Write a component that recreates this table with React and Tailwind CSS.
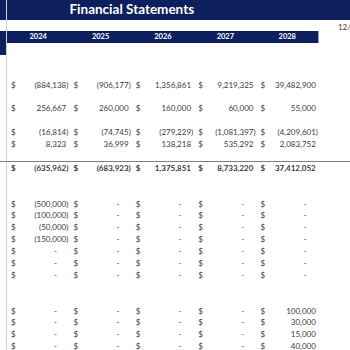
import React from 'react';

const NAVY = 'bg-[#0d1f5c]';

const ROWS = [
  { navyLeft: true },
  {},
  {},
  { vals: [-884138, -906177, 1356861, 9219325, 39482900] },
  {},
  { vals: [256667, 260000, 160000, 60000, 55000] },
  {},
  { vals: [-16814, -74745, -279229, -1081397, -4209601] },
  { vals: [8323, 36999, 138218, 535292, 2083752] },
  { line: true },
  { vals: [-635962, -683923, 1375851, 8733220, 37412052], bold: true },
  {},
  {},
  { vals: [-500000, 0, 0, 0, 0] },
  { vals: [-100000, 0, 0, 0, 0] },
  { vals: [-50000, 0, 0, 0, 0] },
  { vals: [-150000, 0, 0, 0, 0] },
  { vals: [0, 0, 0, 0, 0] },
  { vals: [0, 0, 0, 0, 0] },
  { vals: [0, 0, 0, 0, 0] },
  {},
  {},
  { vals: [0, 0, 0, 0, 100000] },
  { vals: [0, 0, 0, 0, 30000] },
  { vals: [0, 0, 0, 0, 15000] },
  { vals: [0, 0, 0, 0, 40000] },
];

const YEARS = [2024, 2025, 2026, 2027, 2028];

const grid = 'grid grid-cols-[7px_repeat(5,62.4px)_1fr]';

// accounting format: $ on the left, value right with paren padding
const Value = ({ v }) => {
  if (v === 0)
    return (
      <span>
        -<span className="invisible">00)</span>
      </span>
    );
  const s = Math.abs(v).toLocaleString('en-US');
  if (v < 0) return <span>({s})</span>;
  return (
    <span>
      {s}
      <span className="invisible">)</span>
    </span>
  );
};

const LeftCol = ({ navy }) => (
  <div className={`border-r border-[#d0d0d0] ${navy ? NAVY : ''}`} />
);

export default function App() {
  return (
    <div className="w-[350px] h-[350px] overflow-hidden bg-white text-[#3b3b3b] font-['Lato',sans-serif] text-[8px] leading-none">
      {/* title */}
      <div className={`${grid} h-[20px] ${NAVY}`}>
        <LeftCol navy />
        <div className="col-span-4 flex items-center justify-center text-white font-bold text-[13.5px]">
          Financial Statements
        </div>
        <div />
        <div />
      </div>

      {/* date row, clipped by the window in the sheet */}
      <div className={`${grid} h-[11px]`}>
        <LeftCol />
        <div className="col-span-5" />
        <div className="flex items-center pl-[19px] pt-[2px] whitespace-nowrap">12/</div>
      </div>

      {/* years header */}
      <div className={`${grid} h-[12px]`}>
        <LeftCol navy />
        {YEARS.map((y, i) => (
          <div
            key={y}
            className={`${NAVY} flex items-center justify-center text-white font-bold text-[7.5px] ${i === 4 ? 'border-r border-[#8d97b5]' : ''}`}
          >
            {y}
          </div>
        ))}
        <div />
      </div>

      {ROWS.map((r, i) => (
        <div key={i} className={`${grid} h-[11.9px] ${r.line ? 'border-b border-[#7f7f7f]' : ''}`}>
          <LeftCol navy={r.navyLeft} />
          {r.vals
            ? r.vals.map((v, j) => (
                <div
                  key={j}
                  className={`flex items-center justify-between pl-[4px] pr-[1px] ${r.bold ? 'font-bold' : ''}`}
                >
                  <span>$</span>
                  <Value v={v} />
                </div>
              ))
            : <div className="col-span-5" />}
          <div />
        </div>
      ))}
    </div>
  );
}
